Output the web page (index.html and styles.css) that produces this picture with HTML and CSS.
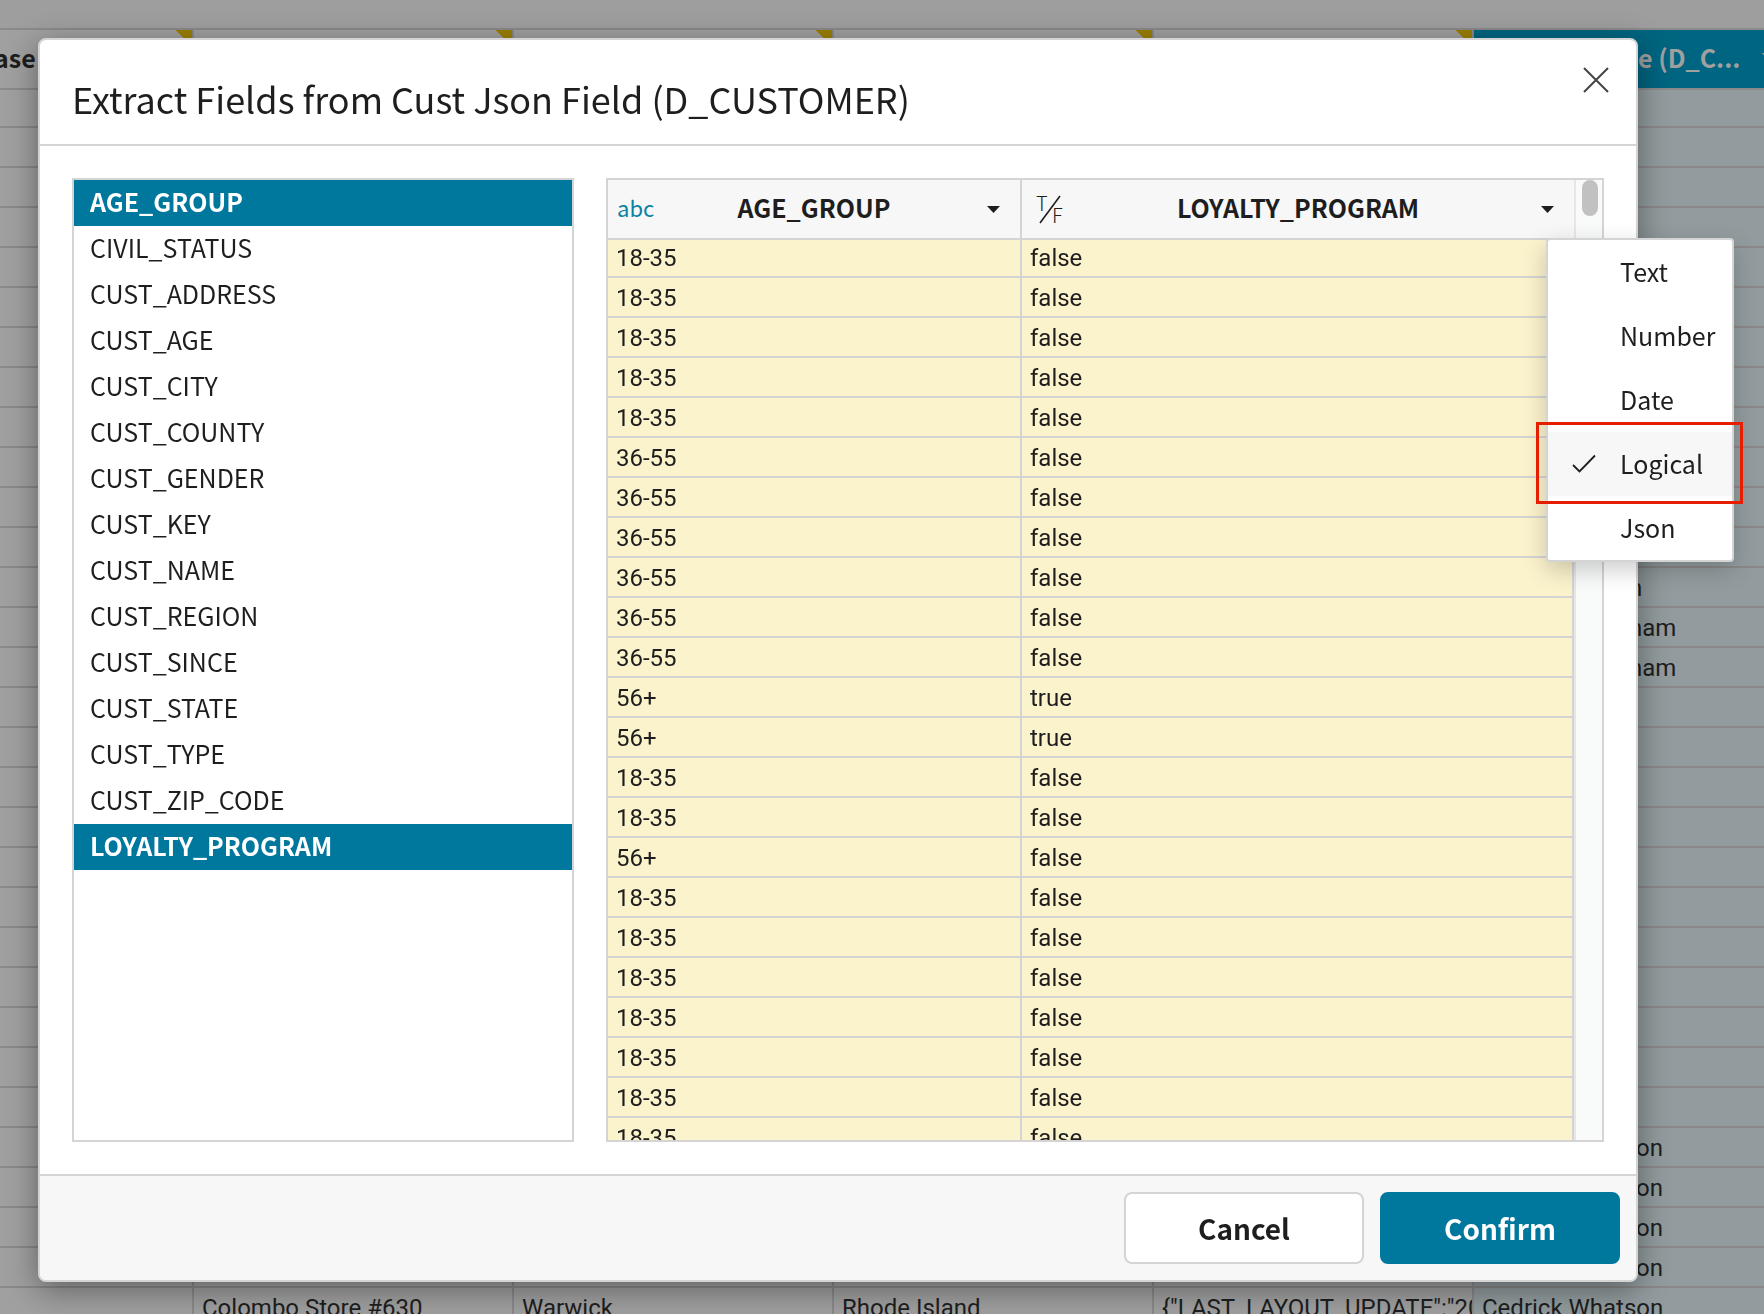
FILE: index.html
```html
<!DOCTYPE html>
<html lang="en">
<head>
<meta charset="utf-8">
<title>Extract Fields</title>
<link rel="stylesheet" href="styles.css">
</head>
<body>
<main class="sheet">
  <table class="grid">
    <colgroup><col class="col-first"><col class="col"><col class="col"><col class="col"><col class="col"><col class="col"></colgroup>
    <thead>
      <tr><th class="changed cut">ase</th><th class="changed"></th><th class="changed"></th><th class="changed"></th><th class="changed"></th><th class="picked"><div class="picked-head"><span>e (D_C...</span><svg width="14" height="8" viewBox="0 0 14 8"><path d="M0 0h14L7 8z" fill="currentColor"/></svg></div></th></tr>
    </thead>
    <tbody>
      <tr><td><td><td><td><td><td></tr>
      <tr><td><td><td><td><td><td></tr>
      <tr><td><td><td><td><td><td></tr>
      <tr><td><td><td><td><td><td></tr>
      <tr><td><td><td><td><td><td></tr>
      <tr><td><td><td><td><td><td></tr>
      <tr><td><td><td><td><td><td></tr>
      <tr><td><td><td><td><td><td></tr>
      <tr><td><td><td><td><td><td></tr>
      <tr><td><td><td><td><td><td></tr>
      <tr><td><td><td><td><td><td></tr>
      <tr><td><td><td><td><td><td></tr>
      <tr><td><td><td><td><td><td><span class="tail">n</span></tr>
      <tr><td><td><td><td><td><td><span class="tail">ham</span></tr>
      <tr><td><td><td><td><td><td><span class="tail">ham</span></tr>
      <tr><td><td><td><td><td><td></tr>
      <tr><td><td><td><td><td><td></tr>
      <tr><td><td><td><td><td><td></tr>
      <tr><td><td><td><td><td><td></tr>
      <tr><td><td><td><td><td><td></tr>
      <tr><td><td><td><td><td><td></tr>
      <tr><td><td><td><td><td><td></tr>
      <tr><td><td><td><td><td><td></tr>
      <tr><td><td><td><td><td><td></tr>
      <tr><td><td><td><td><td><td></tr>
      <tr><td><td><td><td><td><td></tr>
      <tr><td><td><td><td><td><td><span class="tail tail-late">on</span></tr>
      <tr><td><td><td><td><td><td><span class="tail tail-late">on</span></tr>
      <tr><td><td><td><td><td><td><span class="tail tail-late">on</span></tr>
      <tr><td><td><td><td><td><td><span class="tail tail-late">on</span></tr>
      <tr><td><td>Colombo Store #630<td>Warwick<td>Rhode Island<td>{"LAST_LAYOUT_UPDATE":"20<td>Cedrick Whatson</tr>
    </tbody>
  </table>
</main>

<div class="overlay">
  <section class="modal" role="dialog" aria-labelledby="modal-title">
    <header class="modal-header">
      <h1 id="modal-title">Extract Fields from Cust Json Field (D_CUSTOMER)</h1>
      <button class="close" type="button" aria-label="Close"><svg width="26" height="26" viewBox="0 0 26 26"><path d="M1 1l24 24M25 1L1 25" stroke="currentColor" stroke-width="2" fill="none"/></svg></button>
    </header>

    <div class="modal-body">
      <ul class="fields">
        <li class="selected">AGE_GROUP</li>
        <li>CIVIL_STATUS</li>
        <li>CUST_ADDRESS</li>
        <li>CUST_AGE</li>
        <li>CUST_CITY</li>
        <li>CUST_COUNTY</li>
        <li>CUST_GENDER</li>
        <li>CUST_KEY</li>
        <li>CUST_NAME</li>
        <li>CUST_REGION</li>
        <li>CUST_SINCE</li>
        <li>CUST_STATE</li>
        <li>CUST_TYPE</li>
        <li>CUST_ZIP_CODE</li>
        <li class="selected">LOYALTY_PROGRAM</li>
      </ul>

      <div class="preview">
        <div class="preview-frame">
          <table class="data">
            <colgroup><col class="data-first"><col></colgroup>
            <thead>
              <tr>
                <th scope="col"><div class="head"><span class="type">abc</span><span class="name">AGE_GROUP</span><button class="caret" type="button" aria-label="AGE_GROUP type"><svg width="13" height="7" viewBox="0 0 13 7"><path d="M0 0h13L6.500 7z" fill="currentColor"/></svg></button></div></th>
                <th scope="col"><div class="head"><svg class="logical" width="40" height="32" viewBox="0 0 40 32"><text x="6" y="18">T</text><text x="22" y="30">F</text><path d="M10 30L30 3" stroke="currentColor" stroke-width="1.600" fill="none"/></svg><span class="name">LOYALTY_PROGRAM</span><button class="caret" type="button" aria-label="LOYALTY_PROGRAM type"><svg width="13" height="7" viewBox="0 0 13 7"><path d="M0 0h13L6.500 7z" fill="currentColor"/></svg></button></div></th>
              </tr>
            </thead>
            <tbody>
              <tr><td>18-35</td><td>false</td></tr>
              <tr><td>18-35</td><td>false</td></tr>
              <tr><td>18-35</td><td>false</td></tr>
              <tr><td>18-35</td><td>false</td></tr>
              <tr><td>18-35</td><td>false</td></tr>
              <tr><td>36-55</td><td>false</td></tr>
              <tr><td>36-55</td><td>false</td></tr>
              <tr><td>36-55</td><td>false</td></tr>
              <tr><td>36-55</td><td>false</td></tr>
              <tr><td>36-55</td><td>false</td></tr>
              <tr><td>36-55</td><td>false</td></tr>
              <tr><td>56+</td><td>true</td></tr>
              <tr><td>56+</td><td>true</td></tr>
              <tr><td>18-35</td><td>false</td></tr>
              <tr><td>18-35</td><td>false</td></tr>
              <tr><td>56+</td><td>false</td></tr>
              <tr><td>18-35</td><td>false</td></tr>
              <tr><td>18-35</td><td>false</td></tr>
              <tr><td>18-35</td><td>false</td></tr>
              <tr><td>18-35</td><td>false</td></tr>
              <tr><td>18-35</td><td>false</td></tr>
              <tr><td>18-35</td><td>false</td></tr>
              <tr><td>18-35</td><td>false</td></tr>
            </tbody>
          </table>
          <div class="track"><div class="thumb"></div></div>
        </div>

        <div class="menu" role="menu">
          <button type="button" role="menuitemradio" aria-checked="false">Text</button>
          <button type="button" role="menuitemradio" aria-checked="false">Number</button>
          <button type="button" role="menuitemradio" aria-checked="false">Date</button>
          <button type="button" role="menuitemradio" aria-checked="true" class="active"><svg class="check" width="24" height="20" viewBox="0 0 24 20"><path d="M1 12L7.500 18.500L23 2.500" stroke="currentColor" stroke-width="1.800" fill="none"/></svg>Logical</button>
          <button type="button" role="menuitemradio" aria-checked="false">Json</button>
          <div class="callout"></div>
        </div>
      </div>
    </div>

    <footer class="modal-footer">
      <button class="btn" type="button">Cancel</button>
      <button class="btn btn-primary" type="button">Confirm</button>
    </footer>
  </section>
</div>
</body>
</html>
```
FILE: styles.css
```css
* { box-sizing: border-box; }

body {
  margin: 0;
  height: 100vh;
  overflow: hidden;
  background: #9e9e9e;
  color: #1e1e1e;
  font-family: "Noto Sans CJK JP", "Noto Sans", sans-serif;
  font-size: 25px;
}

button {
  margin: 0;
  padding: 0;
  border: 0;
  background: none;
  color: inherit;
  font: inherit;
}

svg { display: block; flex: none; }

/* Dimmed sheet behind the dialog */
.sheet {
  height: 100vh;
  padding-top: 28px;
  overflow: hidden;
}

.grid {
  width: 1794px;
  table-layout: fixed;
  border-collapse: separate;
  border-spacing: 0;
  border-top: 2px solid #8a8a8a;
  background: #a0a0a0;
}

.col-first { width: 194px; }
.col { width: 320px; }

.grid th {
  height: 60px;
  padding: 0 0 4px;
  border-right: 2px solid #8a8a8a;
  border-bottom: 2px solid #8a8a8a;
  font-weight: 700;
  line-height: 40px;
  text-align: left;
}

.grid .changed {
  background: linear-gradient(to top right, transparent 50%, #9a8000 50%) right top / 16px 16px no-repeat;
}

/* The first column is scrolled partly out of view */
.grid .cut { text-indent: -6px; }

.grid .picked {
  background: #006580;
  color: #a0a0a0;
}

.picked-head {
  display: flex;
  align-items: center;
  gap: 22px;
  padding-left: 164px;
}

.grid td {
  height: 40px;
  padding: 2px 8px 0;
  border-right: 2px solid #8a8a8a;
  border-bottom: 2px solid #8a8a8a;
  font-family: Roboto, sans-serif;
  font-size: 24px;
  line-height: 28px;
  white-space: nowrap;
  overflow: hidden;
}

.grid tbody tr:first-child td { height: 38px; }

.grid td:last-child {
  background: #929c9e;
  border-bottom-color: #8c8889;
}

.tail { padding-left: 147px; }
.tail-late { padding-left: 154px; }

/* Dialog */
.overlay {
  position: fixed;
  inset: 0;
  display: flex;
  padding: 38px 126px 32px 38px;
}

.modal {
  flex: 1;
  display: flex;
  flex-direction: column;
  min-width: 0;
  border: 2px solid #d4d4d4;
  border-radius: 8px;
  background: #fff;
  box-shadow: 0 8px 32px rgba(0, 0, 0, .4);
}

.modal-header {
  display: flex;
  justify-content: space-between;
  align-items: flex-start;
  height: 106px;
  padding: 27px 27px 0 32px;
  border-bottom: 2px solid #d4d4d4;
}

.modal-header h1 {
  margin: 0;
  padding-top: 8px;
  font-size: 36px;
  font-weight: 400;
  line-height: 46px;
}

.close { color: #444; }

.modal-body {
  flex: 1;
  display: flex;
  gap: 32px;
  min-height: 0;
  padding: 32px;
}

.fields {
  flex: 0 1 502px;
  margin: 0;
  padding: 0;
  border: 2px solid #d4d4d4;
  list-style: none;
}

.fields li {
  padding: 0 16px 4px;
  line-height: 42px;
}

.fields .selected {
  background: #00789e;
  color: #fff;
  font-weight: 700;
}

.preview {
  position: relative;
  flex: 1;
  min-width: 0;
}

.preview-frame {
  display: flex;
  align-items: flex-start;
  height: 100%;
  border: 2px solid #d4d4d4;
  overflow: hidden;
}

.data {
  flex: 1;
  table-layout: fixed;
  border-collapse: separate;
  border-spacing: 0;
}

.data-first { width: 414px; }

.data th {
  height: 60px;
  padding: 0 8px;
  border-bottom: 2px solid #d4d4d4;
  background: #f7f7f7;
  font-weight: 700;
}

.data th:first-child,
.data td { border-right: 2px solid #d4d4d4; }

.head {
  display: flex;
  align-items: center;
}

.name {
  flex: 1;
  padding-bottom: 4px;
  line-height: 40px;
}

.type {
  width: 40px;
  padding: 0 0 4px 1px;
  color: #0a82a6;
  font-size: 22px;
  font-weight: 400;
  text-align: left;
}

.logical text {
  fill: currentColor;
  font-size: 20px;
  font-weight: 300;
}

.caret {
  display: flex;
  justify-content: flex-end;
  width: 40px;
  padding-right: 12px;
}

.data td {
  height: 40px;
  padding: 2px 8px 0;
  border-bottom: 2px solid #d4d4d4;
  background: #fbf3cc;
  font-family: Roboto, sans-serif;
  font-size: 24px;
  line-height: 28px;
}

.data tbody tr:first-child td {
  height: 38px;
  padding-top: 0;
}

.track {
  align-self: stretch;
  width: 28px;
  padding-left: 6px;
  border-left: 2px solid #e6e6e6;
  background: #f9fbfa;
}

.thumb {
  width: 16px;
  height: 36px;
  border-radius: 8px;
  background: #c1c1c1;
}

/* Type menu */
.menu {
  position: absolute;
  top: 60px;
  right: -130px;
  width: 188px;
  border: 2px solid #d4d4d4;
  border-radius: 4px;
  background: #fff;
  box-shadow: 0 8px 24px rgba(0, 0, 0, .2);
}

.menu button {
  display: flex;
  align-items: center;
  gap: 24px;
  width: 100%;
  height: 64px;
  padding: 0 0 2px 72px;
}

.menu .active {
  padding-left: 24px;
  background: #f7f7f7;
}

.callout {
  position: absolute;
  top: 182px;
  left: -12px;
  width: 207px;
  height: 82px;
  border: 3px solid #e61e00;
}

.modal-footer {
  display: flex;
  justify-content: flex-end;
  gap: 16px;
  padding: 16px;
  border-top: 2px solid #d4d4d4;
  border-radius: 0 0 6px 6px;
  background: #f7f7f7;
}

.btn {
  width: 240px;
  height: 72px;
  border: 2px solid #d4d4d4;
  border-radius: 8px;
  background: #fff;
  font-size: 28px;
  font-weight: 700;
}

.btn-primary {
  border-color: #00789e;
  background: #00789e;
  color: #fff;
}
```
